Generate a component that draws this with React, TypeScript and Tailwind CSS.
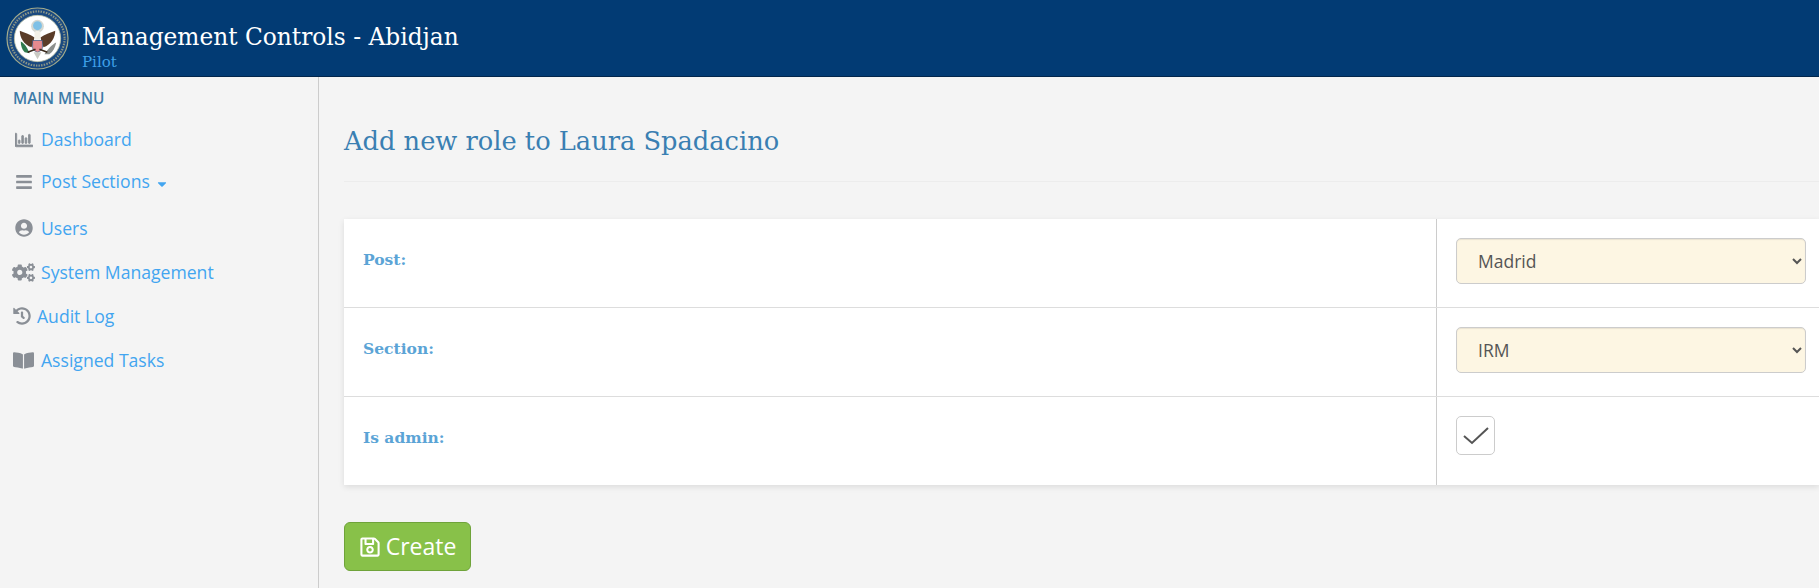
import React from 'react';
import { FaBars, FaBookOpen, FaCaretDown, FaCogs, FaHistory, FaRegChartBar, FaRegSave, FaUserCircle } from 'react-icons/fa';

const Seal = () => (
  <svg viewBox="0 0 64 64" className="h-[63px] w-[63px] shrink-0">
    <circle cx="32" cy="32" r="31" fill="#1b4a80" stroke="#a3ab8c" strokeWidth="1.2" />
    <circle cx="32" cy="32" r="27.5" fill="none" stroke="#b9b58a" strokeWidth="2.2" strokeDasharray="1.5 1.2" opacity="0.7" />
    <circle cx="32" cy="32" r="23.5" fill="#ffffff" stroke="#c4c8a8" strokeWidth="0.8" />
    {/* crest */}
    <circle cx="32" cy="19.5" r="6.5" fill="#d5d8d2" />
    <circle cx="32" cy="19" r="4.5" fill="#7ec0e6" />
    {/* wings */}
    <path d="M14 24 C14 31 18 38 26 41 L29 31 C25 28 19 26 14 24 Z" fill="#5a3c28" />
    <path d="M50 24 C50 31 46 38 38 41 L35 31 C39 28 45 26 50 24 Z" fill="#5a3c28" />
    <path d="M29 26 C30 24 34 24 35 26 L35 33 L29 33 Z" fill="#f2efe6" />
    {/* shield */}
    <path d="M27 34 H37 V41 C37 44 34 45 32 46 C30 45 27 44 27 41 Z" fill="#e58a8e" stroke="#2d4f7c" strokeWidth="0.7" />
    {/* olive branch and arrows */}
    <path d="M15 35 C19 37 22 42 24 47 L19 46 C16 43 15 39 15 35 Z" fill="#2f7a4d" />
    <path d="M51 36 C47 38 42 43 39 48 L44 48 C48 45 50 41 51 36 Z" fill="#8c8f8c" />
    <path d="M22 46 L30 43 M42 46 L34 43" stroke="#3a2a1c" strokeWidth="1.6" />
    <path d="M28 46 L32 53 L36 46 Z" fill="#c9c9c2" />
  </svg>
);

const menu = [
  { label: 'Dashboard', icon: <FaRegChartBar className="h-[18px] w-[18px]" stroke="currentColor" strokeWidth={24} />, row: 'h-[43px]', gap: 'ml-[8px]', iconBox: 'pl-[15px]' },
  { label: 'Post Sections', icon: <FaBars className="h-[18px] w-[18px]" />, row: 'h-[43px] -mt-[1px]', gap: 'ml-[8px]', iconBox: 'pl-[15px]', caret: true },
  { label: 'Users', icon: <FaUserCircle className="h-[18px] w-[18px]" />, row: 'h-[44px] mt-[3px]', gap: 'ml-[8px]', iconBox: 'pl-[15px]' },
  { label: 'System Management', icon: <FaCogs className="h-[23px] w-[23px]" />, row: 'h-[44px]', gap: 'ml-[6px]', iconBox: 'pl-[12px]' },
  { label: 'Audit Log', icon: <FaHistory className="h-[18px] w-[18px]" />, row: 'h-[44px]', gap: 'ml-[6px]', iconBox: 'pl-[13px]' },
  { label: 'Assigned Tasks', icon: <FaBookOpen className="h-[21px] w-[21px]" />, row: 'h-[44px]', gap: 'ml-[7px]', iconBox: 'pl-[13px]' },
];

const Row = ({ label, children, last }: { label: string; children: React.ReactNode; last?: boolean }) => (
  <div className={`flex ${last ? 'h-[88px]' : 'h-[89px] border-b border-[#dddddd]'}`}>
    <div className="w-[1093px] shrink-0 border-r border-[#cccccc] pl-[19px] pt-[29px] font-['DejaVu_Serif',serif] text-[15.5px] leading-[24px] font-bold text-[#5ba4d6]">
      {label}
    </div>
    <div className="flex-1 pl-[19px] pr-[13px] pt-[19px]">{children}</div>
  </div>
);

const Select = ({ value, options }: { value: string; options: string[] }) => (
  <select
    defaultValue={value}
    className="block h-[46px] w-full rounded-[5px] border border-[#cccccc] bg-[#fdf6e3] pl-[17px] font-['Open_Sans',sans-serif] text-[17.5px] text-[#555555] shadow-[inset_0_1px_1px_rgba(0,0,0,0.08)]"
  >
    {options.map((o) => (
      <option key={o}>{o}</option>
    ))}
  </select>
);

export default function App() {
  return (
    <div className="flex h-[588px] w-[1819px] flex-col overflow-hidden bg-[#f4f4f4] font-['Open_Sans',sans-serif]">
      {/* Header */}
      <header className="flex h-[77px] shrink-0 items-center border-b border-[#01264c] bg-[#023b74] pl-[6px]">
        <Seal />
        <div className="ml-[13px] pt-[16px] font-['DejaVu_Serif',serif]">
          <div className="text-[23.3px] leading-[30px] text-white">Management Controls - Abidjan</div>
          <div className="mt-[1px] text-[15px] leading-[18px] text-[#3fa0e8]">Pilot</div>
        </div>
      </header>

      <div className="flex min-h-0 flex-1">
        {/* Sidebar */}
        <aside className="w-[319px] shrink-0 border-r border-[#cccccc] bg-[#f4f4f4]">
          <div className="pl-[13px] pt-[12px] text-[15.4px] leading-[20px] font-semibold text-[#3d7ba8]">MAIN MENU</div>
          <nav className="mt-[9px]">
            {menu.map((m) => (
              <div key={m.label} className={`flex items-center ${m.row} ${m.iconBox}`}>
                <span className="text-[#8a8f96]">{m.icon}</span>
                <span className={`${m.gap} text-[17.6px] text-[#42a5f0]`}>{m.label}</span>
                {m.caret && <FaCaretDown className="ml-[6px] mt-[4px] h-[14px] w-[12px] text-[#42a5f0]" />}
              </div>
            ))}
          </nav>
        </aside>

        {/* Content */}
        <main className="min-w-0 flex-1 pl-[25px]">
          <h1 className="pt-[46px] font-['DejaVu_Serif',serif] text-[25.7px] leading-[36px] text-[#3a7fb2]">
            Add new role to Laura Spadacino
          </h1>
          <div className="mt-[22px] border-b border-[#ececec]" />
          <section className="mt-[37px] bg-white shadow-[0_2px_6px_rgba(0,0,0,0.1)]">
            <Row label="Post:">
              <Select value="Madrid" options={['Madrid', 'Abidjan']} />
            </Row>
            <Row label="Section:">
              <Select value="IRM" options={['IRM', 'HR']} />
            </Row>
            <Row label="Is admin:" last>
              <div className="flex h-[39px] w-[39px] items-center justify-center rounded-[5px] border border-[#cccccc] bg-white">
                <svg viewBox="0 0 26 20" className="h-[20px] w-[26px]" fill="none" stroke="#555555" strokeWidth="2">
                  <path d="M1 10 L9 17 L25 2" />
                </svg>
              </div>
            </Row>
          </section>
          <button className="mt-[37px] flex h-[49px] w-[127px] items-center justify-center gap-[5px] rounded-[6px] border border-[#6fa33a] bg-[#88c149] text-[23px] text-white">
            <FaRegSave className="h-[22px] w-[22px]" />
            Create
          </button>
        </main>
      </div>
    </div>
  );
}
